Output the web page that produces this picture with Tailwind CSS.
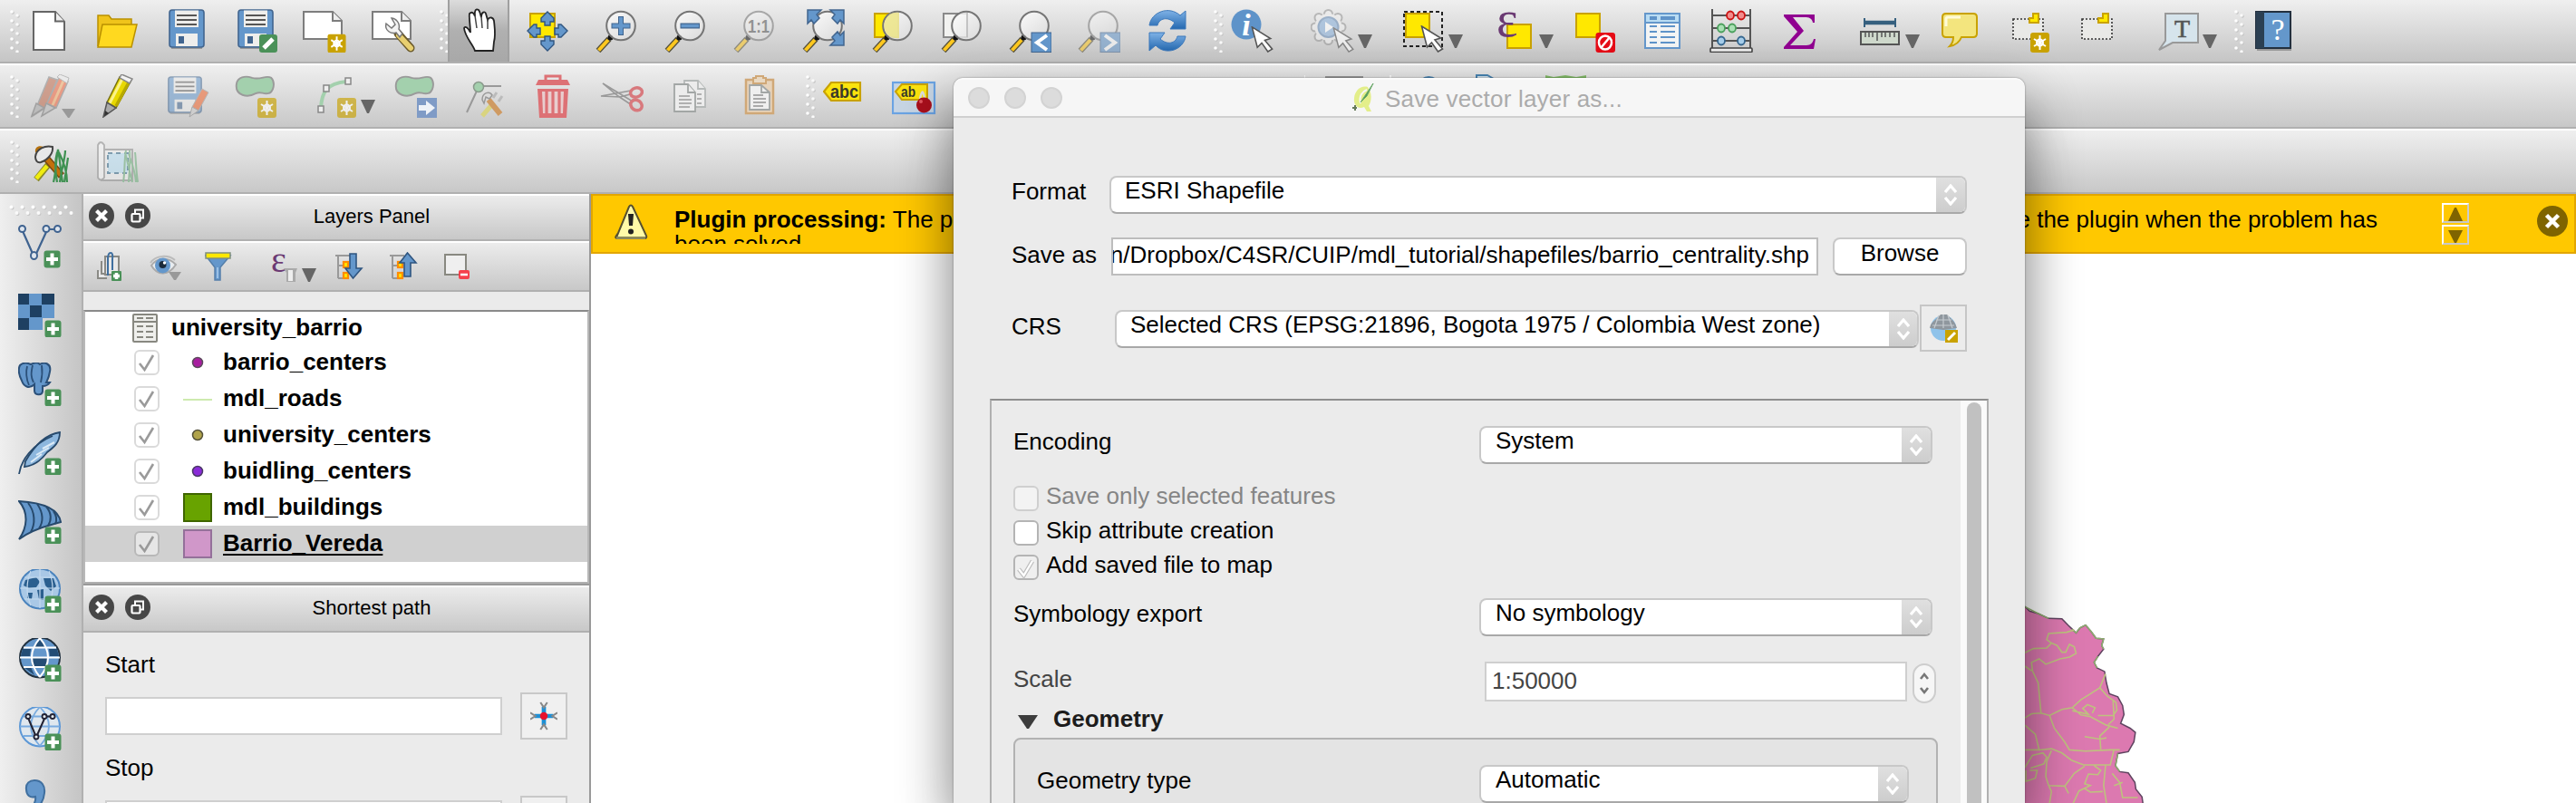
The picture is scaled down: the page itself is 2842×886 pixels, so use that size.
<!DOCTYPE html>
<html lang="en">
<head>
<meta charset="utf-8">
<title>QGIS - Save vector layer as</title>
<script src="https://cdn.jsdelivr.net/npm/@tailwindcss/browser@4"></script>
</head>
<body class="w-[2842px] h-[886px] overflow-hidden relative bg-white text-black text-[26px] leading-[28px] font-['Liberation_Sans',Arial,sans-serif] whitespace-nowrap">

<!-- shared symbols -->
<svg width="0" height="0" class="absolute">
  <defs>
    <linearGradient id="gBlue" x1="0" y1="0" x2="0" y2="1"><stop offset="0" stop-color="#7fb2e6"/><stop offset="1" stop-color="#2468b0"/></linearGradient>
    <linearGradient id="gLens" x1="0" y1="0" x2="1" y2="1"><stop offset="0" stop-color="#fff"/><stop offset="1" stop-color="#dcdcdc"/></linearGradient>
    <pattern id="pGrip" width="12" height="10" patternUnits="userSpaceOnUse">
      <circle cx="4" cy="4" r="1.800" fill="#c4c4c4"/><circle cx="3" cy="3" r="1.800" fill="#fff"/>
      <circle cx="10" cy="8" r="1.800" fill="#c4c4c4"/><circle cx="9" cy="7" r="1.800" fill="#fafafa"/>
    </pattern>
  </defs>
  <symbol id="grip" viewBox="0 0 12 48"><rect width="12" height="48" fill="url(#pGrip)"/></symbol>
  <symbol id="down" viewBox="0 0 16 15"><path d="M0 0H16L9 15H7Z" fill="#666"/></symbol>
  <symbol id="lens" viewBox="0 0 48 48">
    <path d="M16 33L4 46" stroke="#55503a" stroke-width="6.5"/><path d="M15 34L4.500 45.500" stroke="#ffc81e" stroke-width="4"/>
    <circle cx="17.500" cy="31.500" r="3" fill="#111"/>
    <circle cx="29" cy="18.500" r="15.800" fill="url(#gLens)" fill-opacity=".8" stroke="#757575" stroke-width="2"/>
  </symbol>
  <symbol id="star" viewBox="0 0 22 22"><rect width="21" height="22" rx="3" fill="#c9a200"/><path d="M10.500 3V19M4 7L17 15M17 7L4 15" stroke="#fff" stroke-width="2"/><circle cx="10.500" cy="11" r="3.500" fill="none" stroke="#fff" stroke-width="2"/></symbol>
  <symbol id="plus" viewBox="0 0 20 20"><rect x=".5" y=".5" width="18" height="19" rx="3" fill="#4a9158"/><path d="M9.500 3.500V16.500M3 10H16" stroke="#fff" stroke-width="4"/></symbol>
  <symbol id="cursor" viewBox="0 0 26 30"><path d="M1 1L22 14L15.500 16L24 26L19 29L12 19L7 24Z" fill="#fff" stroke="#555" stroke-width="1.600"/></symbol>
  <symbol id="floppy" viewBox="0 0 40 44"><path d="M3 43h34" stroke="#999" stroke-width="2"/><rect x="1" y="1" width="38" height="41" rx="3" fill="#6497cb" stroke="#41658f" stroke-width="1.600"/><rect x="7" y="1.500" width="26" height="18.500" fill="#eeeeec"/><path d="M9 7H31M9 12H31M9 17H31" stroke="#555" stroke-width="1.800"/><rect x="8" y="27" width="24" height="14" fill="#eeeeec"/><rect x="11" y="30" width="6" height="8" fill="#41658f"/></symbol>
  <symbol id="blob" viewBox="0 0 48 26"><path d="M2 10C3 2 12 0 20 3C30 6 36 -1 42 3C47 8 45 20 38 21C32 22 30 18 24 21C15 26 0 24 2 10Z" fill="#a3d0ad" stroke="#9a9a9a" stroke-width="2"/></symbol>
  <symbol id="chk" viewBox="0 0 28 28"><path d="M6 15L11.500 22L21 6" fill="none" stroke="#9a9a9a" stroke-width="2.600"/></symbol>
  <symbol id="updown" viewBox="0 0 14 24"><path d="M1 9L7 2L13 9M1 15L7 22L13 15" fill="none" stroke="currentColor" stroke-width="3.200"/></symbol>
  <symbol id="xbtn" viewBox="0 0 28 28"><circle cx="14" cy="14" r="14" fill="#474747"/><path d="M8.500 8.500L19.500 19.500M19.500 8.500L8.500 19.500" stroke="#fff" stroke-width="4.200"/></symbol>
  <symbol id="floatbtn" viewBox="0 0 28 28"><circle cx="14" cy="14" r="14" fill="#474747"/><path d="M11 11V7.500H20V16.500H16.500" fill="none" stroke="#fff" stroke-width="2"/><rect x="7.500" y="12" width="9" height="8.500" rx="1" fill="none" stroke="#fff" stroke-width="2.200"/></symbol>
  <symbol id="page" viewBox="0 0 48 48"><path d="M1 3H33L43 13V33H1Z" fill="#fff" stroke="#7d7d7d" stroke-width="2"/><path d="M33 3V13H43" fill="#eee" stroke="#7d7d7d" stroke-width="2"/></symbol>
  <symbol id="target" viewBox="0 0 32 32"><path d="M16 5V27M5 16H27" stroke="#1b8fd6" stroke-width="5"/><path d="M12 0L16 6L20 0M12 32L16 26L20 32M0 12L6 16L0 20M32 12L26 16L32 20" stroke="#888" fill="none" stroke-width="2.200"/><circle cx="16" cy="16" r="4.500" fill="#e8112d"/></symbol>
</svg>

<!-- toolbar 1 -->
<div class="h-[72px] border-b-2 border-white">
<div class="h-[70px] border-b-2 border-[#b0b0b0] bg-linear-to-b from-[#efefef] to-[#c5c5c5] flex items-start pl-[10px] [&>svg]:shrink-0 [&>svg]:mt-[10px]">
  <svg width="12" height="48"><use href="#grip"/></svg>
  <svg class="ml-2" width="48" height="48"><path d="M7 3H31L41 14V45H7Z" fill="#fff" stroke="#666" stroke-width="2"/><path d="M31 3V13.500H41" fill="#eee" stroke="#666" stroke-width="2"/></svg>
  <svg class="ml-7" width="48" height="48"><path d="M2 41V7H14L17 11H39V20" fill="#f0c41b" stroke="#b99000" stroke-width="1.500"/><path d="M7 17H45L39 42H2Z" fill="#ffd91f" stroke="#b99000" stroke-width="1.500"/></svg>
  <svg class="ml-7" width="48" height="48"><use href="#floppy" x="4" width="40" height="44"/></svg>
  <svg class="ml-7" width="48" height="48"><use href="#floppy" x="4" width="40" height="44"/><rect x="28" y="28" width="20" height="20" rx="3" fill="#4a9158"/><path d="M33 43L43 33" stroke="#fff" stroke-width="5"/></svg>
  <svg class="ml-7" width="49" height="48"><use href="#page" width="48" height="48"/><use href="#star" x="27" y="27.500" width="22" height="21"/></svg>
  <svg class="ml-[27px]" width="48" height="48"><use href="#page" width="48" height="48"/><path d="M29 27L43 43" stroke="#6b5a2a" stroke-width="9" stroke-linecap="round"/><path d="M30 29L43 43" stroke="#e8cf70" stroke-width="6" stroke-linecap="round"/><path d="M16 16C14 24 22 28 27 26L31 31L34 27L30 22C32 15 26 10 22 10L26 17L22 21Z" fill="#f3f3f3" stroke="#777" stroke-width="1.500"/></svg>
  <div class="ml-[26px] mt-[10px] w-[10px] h-12 overflow-hidden shrink-0"><svg width="12" height="48" class="max-w-none"><use href="#grip"/></svg></div>
  <div class="w-[68px] h-[68px] shrink-0 bg-linear-to-b from-[#dcdcdc] via-[#b0b0b0] to-[#a8a8a8] border-x-2 border-[#a0a0a0] pl-2 pt-[9px]">
    <svg width="48" height="50"><path d="M20 47C18 40 9 32 8 22C9 19 13 22 15 27C15 20 13 8 14 6C17 3 19 6 20 9C19 3 21 0 24 2C26 4 26 8 27 10C27 4 31 3 32 6L34 13C36 9 40 10 41 14C42 24 43 30 41 37L40 47Z" fill="#fff" stroke="#222" stroke-width="1.800"/><path d="M20 8L22 22M27 9L28 22M34 12V23" stroke="#444" stroke-width="1.500"/></svg>
  </div>
  <svg class="ml-[18px]" width="48" height="48"><rect x="5" y="5" width="27" height="26" fill="#ffe800" stroke="#c9a200" stroke-width="2"/><g fill="#6497cb" stroke="#2f5580" stroke-width="1.400"><path d="M24 3L31 10L31 14H27V18H21V14H17V10Z"/><path d="M24 46L31 39V35H27V30H21V35H17V39Z"/><path d="M2 24L9 17H12V21H16V28H12V31H9Z"/><path d="M46 24L39 17H36V21H32V28H36V31H39Z"/></g></svg>
  <svg class="ml-7" width="48" height="48"><use href="#lens" width="48" height="48"/><path d="M29 8V29M18.500 18.500H39.500" stroke="#41658f" stroke-width="6"/><path d="M29 9V28M19.500 18.500H38.500" stroke="#6497cb" stroke-width="4"/></svg>
  <svg class="ml-7" width="48" height="48"><use href="#lens" width="48" height="48"/><path d="M18.500 18.500H40" stroke="#41658f" stroke-width="6"/><path d="M19.500 18.500H39" stroke="#6497cb" stroke-width="3.500"/></svg>
  <svg class="ml-7 opacity-55" width="48" height="48"><use href="#lens" width="48" height="48"/><text x="29" y="26" text-anchor="middle" font-size="20" font-weight="bold" textLength="24" lengthAdjust="spacingAndGlyphs" fill="#555">1:1</text></svg>
  <svg class="ml-7" width="48" height="48"><use href="#lens" width="48" height="48"/><g fill="#6497cb" stroke="#41658f" stroke-width="1.500"><path d="M7 1H22L17 6L20 10L14 16L11 12L7 16ZM47 1H32L37 6L34 10L40 16L43 12L47 16ZM47 40H32L37 35L34 31L40 25L43 29L47 25Z"/></g></svg>
  <svg class="ml-7" width="50" height="48"><rect x="5" y="5" width="26" height="26" fill="#ffe800" stroke="#c9a200" stroke-width="2"/><use href="#lens" x="1" width="48" height="48"/><path d="M32 4C20 2 14 12 16 22C18 30 26 33 32 32Z" fill="#e9e283" opacity=".7"/></svg>
  <svg class="ml-[26px]" width="50" height="48"><rect x="5" y="5" width="26" height="26" fill="#f2f2f0" stroke="#8a8a8a" stroke-width="2"/><use href="#lens" x="1" width="48" height="48"/><path d="M31 4V31" stroke="#bbb" stroke-width="1.500"/></svg>
  <svg class="ml-[26px]" width="48" height="48"><use href="#lens" width="48" height="48"/><rect x="26" y="26" width="22" height="21.500" fill="#6497cb" stroke="#41658f"/><path d="M43 29L32 37L43 45" fill="none" stroke="#fff" stroke-width="4"/></svg>
  <svg class="ml-7 opacity-55" width="48" height="48"><use href="#lens" width="48" height="48"/><rect x="26" y="26" width="22" height="21.500" fill="#6497cb" stroke="#41658f"/><path d="M31 29L42 37L31 45" fill="none" stroke="#fff" stroke-width="4"/></svg>
  <svg class="ml-7" width="48" height="48"><path d="M4 18C6 3 26 -4 38 7L44 2V22H27L32 15C24 8 15 10 13 18Z" fill="url(#gBlue)" stroke="#3d79bb"/><path d="M44 30C42 45 22 52 11 40L4 46V26H21L16 33C24 40 33 38 35 30Z" fill="url(#gBlue)" stroke="#3d79bb"/></svg>
  <svg class="ml-[26px]" width="12" height="48"><use href="#grip"/></svg>
  <svg class="ml-2" width="48" height="48"><circle cx="17" cy="17" r="16.500" fill="#5e93c9"/><text x="17" y="29" text-anchor="middle" font-family="Liberation Serif" font-style="italic" font-weight="bold" font-size="34" fill="#fff">i</text><use href="#cursor" x="22" y="19" width="26" height="29"/></svg>
  <svg class="ml-10" width="48" height="48"><g opacity=".6"><g fill="#eee" stroke="#999" stroke-width="2"><circle cx="19.500" cy="5.500" r="4.500"/><circle cx="30" cy="9.500" r="4.500"/><circle cx="34" cy="20" r="4.500"/><circle cx="30" cy="30.500" r="4.500"/><circle cx="19.500" cy="34.500" r="4.500"/><circle cx="9" cy="30.500" r="4.500"/><circle cx="5" cy="20" r="4.500"/><circle cx="9" cy="9.500" r="4.500"/></g><circle cx="19.500" cy="20" r="15" fill="#eee"/><circle cx="19.500" cy="20" r="11" fill="#8fb4dc" stroke="#6d90b8" stroke-width="2"/><path d="M16 14V26L25 20Z" fill="#fff"/><use href="#cursor" x="24" y="20" width="25" height="28"/></g></svg>
  <svg class="ml-1 translate-y-7" width="16" height="15"><use href="#down"/></svg>
  <svg class="ml-[34px]" width="48" height="48"><rect x="1" y="3" width="42" height="38" fill="none" stroke="#222" stroke-width="2" stroke-dasharray="4 3"/><rect x="3" y="5" width="26" height="26" fill="#ffe800" stroke="#c9a200" stroke-width="2"/><use href="#cursor" x="19" y="18" width="27" height="30"/></svg>
  <svg class="ml-[2px] translate-y-7" width="16" height="15"><use href="#down"/></svg>
  <svg class="ml-[34px]" width="48" height="48"><rect x="15" y="17" width="26" height="26" fill="#ffe800" stroke="#c9a200" stroke-width="2"/><text x="3" y="30" font-family="Liberation Serif" font-size="56" fill="#6b3a73">ε</text></svg>
  <svg class="ml-[2px] translate-y-7" width="16" height="15"><use href="#down"/></svg>
  <svg class="ml-[22px]" width="48" height="48"><rect x="3" y="5" width="26" height="26" fill="#ffe800" stroke="#c9a200" stroke-width="2"/><rect x="24.500" y="26" width="21.500" height="22" rx="3" fill="#e60b16"/><ellipse cx="35" cy="37" rx="7" ry="7.500" fill="none" stroke="#fff" stroke-width="2.500"/><path d="M40 31L30 43" stroke="#fff" stroke-width="2.500"/></svg>
  <svg class="ml-[26px]" width="48" height="48"><rect x="5" y="5" width="38" height="38" fill="#f3f4f4" stroke="#6497cb" stroke-width="2"/><rect x="5" y="5" width="38" height="10" fill="#b9dcf3" stroke="#6497cb" stroke-width="2"/><path d="M10 10H18M22 10H38" stroke="#5e93c9" stroke-width="4"/><path d="M10 19H18M22 19H38M10 25H18M22 25H38M10 31H18M22 31H38M10 37H18M22 37H38" stroke="#5e93c9" stroke-width="2.200"/></svg>
  <svg class="ml-7" width="48" height="48"><path d="M3 0V43M45 0V43M3 7H45M3 21H45M3 35H45" stroke="#555" stroke-width="2"/><rect x="1" y="43" width="46" height="4.500" rx="1" fill="#eee" stroke="#444" stroke-width="1.600"/><g stroke-width="1.800"><g fill="#f28d8d" stroke="#cc1414"><ellipse cx="23" cy="7" rx="4" ry="4.500"/><ellipse cx="35" cy="7" rx="4" ry="4.500"/></g><g fill="#a9e0b4" stroke="#4a9f5c"><ellipse cx="13" cy="21" rx="4" ry="4.500"/><ellipse cx="25" cy="21" rx="4" ry="4.500"/></g><g fill="#a6cdea" stroke="#36678f"><ellipse cx="13" cy="35" rx="4" ry="4.500"/><ellipse cx="35" cy="35" rx="4" ry="4.500"/></g></g></svg>
  <svg class="ml-7" width="48" height="48"><path d="M6 6H40V15H38C37 10 34 9 29 9H16L28 24L13 40H31C36 40 38 37 39 33H41L39 44H6V42L21 25L6 8Z" fill="#900090"/></svg>
  <svg class="ml-[38px]" width="48" height="48"><path d="M9 10V20M43 10V20" stroke="#36607f" stroke-width="2"/><path d="M9 15H43" stroke="#36607f" stroke-width="4.500"/><rect x="5" y="25" width="42" height="14" fill="#cfd9cc" stroke="#555" stroke-width="2"/><path d="M10 26V31M14 26V31M18 26V31M23 26V35M28 26V31M32 26V31M37 26V31M42 26V31" stroke="#555" stroke-width="1.500"/></svg>
  <svg class="ml-[6px] translate-y-7" width="16" height="15"><use href="#down"/></svg>
  <svg class="ml-5" width="48" height="48"><path d="M9 5H39Q43 5 43 9V27Q43 31 39 31H26C24 36 19 40 13 41C16 38 17 35 17 31H9Q5 31 5 27V9Q5 5 9 5Z" fill="#f3e57e" stroke="#c9a200" stroke-width="2"/><path d="M9 19V11Q9 9 11 9H25" fill="none" stroke="#fffbd8" stroke-width="3"/></svg>
  <svg class="ml-[30px]" width="48" height="48"><rect x="5" y="11" width="33" height="22" fill="#e9e9e7" stroke="#333" stroke-width="1.600" stroke-dasharray="2 2"/><path d="M27 5H33V15H23V10H27Z" fill="#ffe800" stroke="#c9a200" stroke-width="2"/><use href="#star" x="24" y="26" width="22" height="22"/></svg>
  <svg class="ml-7" width="48" height="48"><rect x="5" y="11" width="33" height="22" fill="#e9e9e7" stroke="#333" stroke-width="1.600" stroke-dasharray="2 2"/><path d="M28 5H34V15H23V10H28Z" fill="#ffe800" stroke="#c9a200" stroke-width="2"/></svg>
  <svg class="ml-10" width="48" height="48"><path d="M9 5H45V37H17L2 45L9 35Z" fill="#d6e4ec" stroke="#999" stroke-width="2"/><text x="27.500" y="31" text-anchor="middle" font-family="Liberation Serif" font-size="28" fill="#555" stroke="#555" stroke-width=".6">T</text></svg>
  <svg class="ml-[2px] translate-y-7" width="16" height="15"><use href="#down"/></svg>
  <svg class="ml-[18px]" width="12" height="48"><use href="#grip"/></svg>
  <svg class="ml-2" width="48" height="48"><path d="M6 45H44" stroke="#999" stroke-width="2"/><rect x="5" y="3" width="38" height="40" fill="#6497cb" stroke="#23303f" stroke-width="2"/><rect x="5" y="3" width="9" height="40" fill="#2b3f52"/><text x="29" y="34" text-anchor="middle" font-family="Liberation Serif" font-size="34" fill="#fff">?</text></svg>
</div>
</div>

<!-- toolbar 2 -->
<div class="h-[72px] border-b-2 border-white">
<div class="h-[70px] border-b-2 border-[#b0b0b0] bg-linear-to-b from-[#efefef] to-[#c8c8c8] flex items-start pl-[10px] [&>svg]:shrink-0 [&>svg]:mt-[10px]">
  <svg width="12" height="48"><use href="#grip"/></svg>
  <svg class="ml-2" width="54" height="48"><g opacity=".55"><path d="M12 32L24 3L33 6L20 37L6 46Z" fill="#bf6a4c" stroke="#888" stroke-width="1.500"/><path d="M10 32L5 46L19 37Z" fill="#aaa" stroke="#777" stroke-width="1.500"/><path d="M22 32L35 4L45 8L32 37Z" fill="#f0643c" stroke="#888" stroke-width="1.500"/><path d="M28 34L40 7" stroke="#f5b06c" stroke-width="3"/><path d="M33 3L36 0L46 4L44 10Z" fill="#eee" stroke="#999"/><path d="M21 32L16 46L31 37Z" fill="#bbb" stroke="#777" stroke-width="1.500"/></g><path d="M38 38H53L46.500 48H45Z" fill="#999"/></svg>
  <svg class="ml-[22px]" width="48" height="48"><path d="M12 31L26 3L38 8L22 37Z" fill="#e8d800" stroke="#777013" stroke-width="1.500"/><path d="M15 32L29 5" stroke="#fbf28a" stroke-width="3"/><path d="M22 35L36 9" stroke="#b7a900" stroke-width="3.500"/><path d="M26 4L28 0L40 5L37 10Z" fill="#f3f3f3" stroke="#888" stroke-width="1.500"/><path d="M12 31L8 47L22 37Z" fill="#aaa" stroke="#555" stroke-width="1.500"/><path d="M9 46L10 40L14 43Z" fill="#333"/></svg>
  <svg class="ml-7" width="50" height="48"><g opacity=".55"><use href="#floppy" x="2" y="2" width="40" height="42"/><path d="M30 36L41 16L48 20L37 40Z" fill="#f0642c" stroke="#999"/><path d="M30 36L27 47L37 40Z" fill="#ccc" stroke="#888"/></g></svg>
  <svg class="ml-[26px]" width="48" height="48"><use href="#blob" x="1" y="1" width="46" height="25"/><use href="#star" x="26" y="26" width="22" height="22" opacity=".65"/></svg>
  <svg class="ml-[42px]" width="48" height="48"><path d="M6 37C7 20 12 10 34 8" fill="none" stroke="#a3d0ad" stroke-width="4"/><g fill="#eee" stroke="#888" stroke-width="1.500"><rect x="3" y="35" width="6" height="7"/><rect x="9" y="12" width="6" height="7"/><rect x="33" y="4" width="6" height="7"/></g><use href="#star" x="24" y="26" width="22" height="22" opacity=".65"/></svg>
  <svg class="ml-0.5 translate-y-7" width="16" height="15"><use href="#down"/></svg>
  <svg class="ml-[20px]" width="48" height="48"><use href="#blob" x="1" y="1" width="46" height="25"/><rect x="26" y="26" width="22" height="22" fill="#7f9bc6"/><path d="M28 34H36V29L46 37L36 45V40H28Z" fill="#eef2f8"/></svg>
  <svg class="ml-7" width="48" height="48"><path d="M18 14L5 42M18 13H43" stroke="#999" stroke-width="2"/><circle cx="18" cy="14" r="5.500" fill="#a3d0ad" stroke="#8a9a8c" stroke-width="1.500"/><path d="M22 46L34 32" stroke="#d9d480" stroke-width="5"/><path d="M29 28L42 44" stroke="#cf9a62" stroke-width="6"/><path d="M22 28C22 20 30 18 33 23L30 27L26 25L24 32Z" fill="#ddd" stroke="#999" stroke-width="1.500"/><path d="M34 26L38 20M40 30L44 24" stroke="#bbb" stroke-width="3"/></svg>
  <svg class="ml-7" width="48" height="48"><path d="M16 7V2H32V7" fill="none" stroke="#dd7175" stroke-width="3"/><path d="M5 12L8 6H40L43 12Z" fill="#dd7175"/><path d="M7 16H41L39 48H9Z" fill="#dd7175"/><path d="M12 19H36L35 43H13Z" fill="#ececec" opacity=".75"/><path d="M17 19V43M24 19V43M31 19V43" stroke="#dd7175" stroke-width="3.200"/></svg>
  <svg class="ml-7" width="48" height="48"><path d="M3 10L36 30L32 32L20 24ZM1 24L34 18L33 22L22 25Z" fill="#ddd" stroke="#999" stroke-width="1.600"/><ellipse cx="40" cy="20" rx="6.500" ry="5" fill="none" stroke="#d8797d" stroke-width="3.500" transform="rotate(-15 40 20)"/><ellipse cx="40" cy="34" rx="6.500" ry="5.500" fill="none" stroke="#d8797d" stroke-width="3.500" transform="rotate(35 40 34)"/></svg>
  <svg class="ml-7" width="48" height="48"><g stroke="#b5b9b8" stroke-width="1.800" fill="#ececec"><path d="M17 7H32L40 16V36H17Z"/><path d="M32 7V16H40"/><path d="M6 11H21L29 20V41H6Z" stroke="#a2a6a5"/><path d="M21 11V20H29" stroke="#a2a6a5"/></g><path d="M11 24H23M11 28H25M11 32H25M11 36H23M31 22H36M31 27H36M31 32H36" stroke="#b0b0b0" stroke-width="1.800"/></svg>
  <svg class="ml-7" width="48" height="48"><rect x="9" y="6" width="30" height="37" fill="#e7d3bb" stroke="#d0a877" stroke-width="2.500"/><path d="M13 12H26L35 20V39H13Z" fill="#efefef" stroke="#a2a6a5" stroke-width="1.800"/><path d="M26 12V20H35" fill="none" stroke="#a2a6a5" stroke-width="1.800"/><path d="M17 23H28M17 27H31M17 31H31M17 35H28" stroke="#aaa" stroke-width="1.800"/><path d="M17 10V4H20V2H28V4H31V10Z" fill="#e9d9c3" stroke="#d0a877" stroke-width="2"/></svg>
  <svg class="ml-[26px]" width="12" height="48"><use href="#grip"/></svg>
  <svg class="ml-2" width="44" height="48"><path d="M1 19L9 9H41V29H9Z" fill="#fbe30e" stroke="#c9a200" stroke-width="2.200"/><text x="8" y="26" font-size="20" font-weight="bold" textLength="31" lengthAdjust="spacingAndGlyphs" fill="#3a3a2a">abc</text></svg>
  <svg class="ml-8" width="50" height="48"><rect x="1" y="9" width="46" height="34" fill="#c7d5e4" stroke="#6aa3e3" stroke-width="2.200"/><path d="M4 19L11 11H39V28H11Z" fill="#fbe30e" stroke="#c9a200" stroke-width="2"/><text x="10" y="25" font-size="16" font-weight="bold" textLength="16" lengthAdjust="spacingAndGlyphs" fill="#3a3a2a">ab</text><path d="M31 27Q34 12 36 27" fill="none" stroke="#ddd" stroke-width="2.500"/><ellipse cx="35.500" cy="34" rx="8.500" ry="8.500" fill="#a90f1c"/><circle cx="32" cy="30" r="2" fill="#e0545e"/></svg>
  <!-- icons mostly hidden under the dialog -->
  <svg class="ml-[405px]" width="320" height="48"><path d="M0 1V4M95 1V4" stroke="#fff" stroke-width="2"/><path d="M23 3H65" stroke="#999" stroke-width="2"/><path d="M129 5Q137 -1 146 5Z" fill="#4a86b5"/><path d="M190 5V1H202L209 5" stroke="#4a86b5" stroke-width="2" fill="#dceaf4"/><path d="M266 4V1L275 3L288 1L300 3L311 1V5H266Z" fill="#86c06b"/></svg>
</div>
</div>

<!-- toolbar 3 -->
<div class="h-[70px] border-b-2 border-[#b0b0b0] bg-linear-to-b from-[#efefef] to-[#c8c8c8] flex items-start pl-[10px] [&>svg]:shrink-0 [&>svg]:mt-[10px]">
  <svg width="12" height="48"><use href="#grip"/></svg>
  <svg class="ml-2" width="50" height="50"><path d="M10 44L23 28" stroke="#8a8a2a" stroke-width="7"/><path d="M10 43L22 29" stroke="#f0ec10" stroke-width="4.500"/><path d="M17 16L38 40" stroke="#7a4a10" stroke-width="8"/><path d="M18 17L37 39" stroke="#c4700b" stroke-width="5"/><path d="M9 14C8 8 13 6 18 8L13 16Z" fill="#b5720f"/><path d="M9 19C10 10 20 6 28 8C29 14 24 22 15 25C11 26 9 23 9 19Z" fill="#e8e8e8" stroke="#444" stroke-width="2"/><path d="M29 47C32 35 32 20 34 11C36 22 37 35 39 47M36 47C38 32 42 20 42 12M44 47C44 34 38 20 35 14M33 14C30 25 31 36 33 47M45 20L41 47" fill="none" stroke="#3f9152" stroke-width="2.200"/></svg>
  <svg class="ml-[26px]" width="50" height="50"><g opacity=".65"><path d="M6 11H40V45H6Z" fill="#eee" stroke="#999" stroke-width="2"/><path d="M2 6Q5 0 9 6V42Q5 47 2 42Z" fill="#f3f3f3" stroke="#999" stroke-width="1.800"/><rect x="13" y="15" width="22" height="22" fill="#bfe0f2" stroke="#4c7a96" stroke-width="2" stroke-dasharray="5 4"/><path d="M30 47C32 35 31 20 33 12M36 47C37 32 38 20 37 12M44 47C43 34 38 22 36 16M46 47C44 34 44 22 43 14M40 47L32 14" fill="none" stroke="#7ab487" stroke-width="2"/></g></svg>
</div>

<!-- main area -->
<div class="flex h-[672px] overflow-hidden">

  <!-- layer source toolbar -->
  <div class="w-[92px] h-[672px] shrink-0 bg-linear-to-r from-[#efefef] to-[#c5c5c5] border-r-2 border-[#b0b0b0] flex flex-col items-start pl-5 pt-3 gap-[28px] [&>svg]:shrink-0 overflow-hidden">
    <svg class="-ml-[10px] -mb-[18px]" width="72" height="12"><defs><pattern id="pGripH" width="12" height="12" patternUnits="userSpaceOnUse"><circle cx="3.500" cy="3.500" r="2" fill="#c6c6c6"/><circle cx="2.500" cy="2.500" r="2" fill="#fff"/><circle cx="9.500" cy="10" r="2" fill="#c6c6c6"/><circle cx="8.500" cy="9" r="2" fill="#fafafa"/></pattern></defs><rect width="72" height="12" fill="url(#pGripH)"/></svg>
    <svg width="48" height="48"><path d="M5 7L17 34M19 34L31 8M33 5H41" stroke="#3f6390" stroke-width="2.200"/><g fill="#dfe6ee" stroke="#3f6390" stroke-width="2"><circle cx="4.500" cy="4.500" r="3.500"/><circle cx="31" cy="4.500" r="3.500"/><circle cx="43.500" cy="4.500" r="3.500"/><ellipse cx="17.500" cy="34" rx="3.500" ry="4"/></g><use href="#plus" x="28" y="28" width="20" height="20"/></svg>
    <svg width="48" height="48"><rect width="40" height="40" fill="#6497cb"/><path d="M0 0H12V12H0ZM26 0H40V12H26ZM13 13H26V26H13ZM0 27H12V40H0Z" fill="#1e4062"/><path d="M27 27H40V40H27Z" fill="#d6d6d6"/><use href="#plus" x="29" y="29" width="20" height="20"/></svg>
    <svg width="48" height="48"><path d="M2 3C6 -1 12 1 14 2C18 0 22 0 24 2C29 -1 37 1 35 10C34 17 32 20 31 22L35 22C33 25 29 26 27 26V32C26 37 18 36 18 31V24C12 30 6 26 4 20C1 14 0 7 2 3Z" fill="#6497cb" stroke="#2b5079" stroke-width="2"/><path d="M10 4C8 12 9 18 12 25M16 3C14 12 14 16 17 22M26 3C27 10 27 14 25 22" fill="none" stroke="#2b5079" stroke-width="1.800"/><use href="#plus" x="29" y="29" width="20" height="20"/></svg>
    <svg width="48" height="48"><path d="M46 1C32 3 20 12 8 33L7 39C18 38 26 31 32 23C40 17 46 12 46 1Z" fill="#8db7de" stroke="#274a6d" stroke-width="1.800"/><path d="M1 47C3 32 16 14 38 5" fill="none" stroke="#274a6d" stroke-width="1.800"/><path d="M14 34L26 25M20 26L34 18M27 19L40 12" stroke="#dcebf7" stroke-width="2"/><use href="#plus" x="29" y="29" width="20" height="20"/></svg>
    <svg width="48" height="48"><path d="M1 1C18 2 44 6 47 24C38 27 18 30 1 43C10 30 12 14 1 1Z" fill="#6497cb" stroke="#274a6d" stroke-width="2"/><path d="M11 3C19 13 19 26 14 35M21 4C28 14 28 24 23 31M31 7C37 14 37 22 33 28M39 12C43 18 43 22 41 26" fill="none" stroke="#274a6d" stroke-width="2"/><use href="#plus" x="29" y="29" width="20" height="20"/></svg>
    <svg width="48" height="48"><circle cx="24" cy="21.500" r="22" fill="#a9c8e6" stroke="#4a83bd" stroke-width="2"/><path d="M8 12L20 9L24 14L20 20L12 21L6 18ZM28 10L39 10L42 19L36 24L30 18ZM21 23L28 22L28 34L23 33Z" fill="#2b5f8f"/><path d="M10 26L16 26L15 33L10 32Z" fill="#2b5f8f"/><path d="M2 21H46M24 0V43M7 9H41M7 33H41M14 2Q6 21 14 40M34 2Q42 21 34 40" fill="none" stroke="#c3d9ee" stroke-width="1.200"/><use href="#plus" x="29" y="29" width="20" height="20"/></svg>
    <svg width="48" height="48"><circle cx="24" cy="21.500" r="22" fill="#6497cb" stroke="#22313f" stroke-width="2"/><path d="M16 11H32L24 1ZM15 21H32V31H15ZM5 12H14L13 20H3ZM34 12H43L45 20H35ZM6 32H14L18 41ZM33 32H42L30 41Z" fill="#244d75"/><path d="M2 21.500H46M6 10.500H42M6 32H42M24 0Q6 21 24 43M24 0Q42 21 24 43" fill="none" stroke="#fff" stroke-width="2"/><use href="#plus" x="29" y="29" width="20" height="20"/></svg>
    <svg width="48" height="48"><circle cx="24" cy="21.500" r="22" fill="#dfe7ee" stroke="#5b97d6" stroke-width="2"/><path d="M2 21.500H46M6 10.500H42M6 32H42M24 0Q4 21 24 43M24 0Q44 21 24 43" fill="none" stroke="#79abdf" stroke-width="1.800"/><path d="M11 12L19 31M21 31L29 13M30 10.500H37" stroke="#223" stroke-width="2"/><g fill="#e8eef3" stroke="#223" stroke-width="1.800"><circle cx="11" cy="10.500" r="2.500"/><circle cx="29" cy="10.500" r="2.500"/><circle cx="38" cy="10.500" r="2.500"/><circle cx="20" cy="33" r="2.500"/></g><use href="#plus" x="29" y="29" width="20" height="20"/></svg>
    <svg width="48" height="48"><path d="M9 15C8 8 13 5 18 5C26 5 30 11 29 19C28 30 21 37 12 41L11 38C17 34 20 28 19 23C13 25 9 21 9 15Z" fill="#6497cb" stroke="#3f6f9f" stroke-width="2"/></svg>
  </div>

  <!-- docked panels -->
  <div class="w-[560px] h-[672px] overflow-hidden shrink-0 bg-[#ebebeb] border-r-2 border-[#999] flex flex-col">
    <div class="h-[52px] shrink-0 border-t-2 border-t-white border-b-2 border-b-[#b0b0b0] bg-linear-to-b from-[#ececec] to-[#c8c8c8] grid grid-cols-[70px_1fr] text-[22px]">
      <div class="flex gap-[12px] pl-[6px] pt-2"><svg class="shrink-0" width="28" height="28"><use href="#xbtn"/></svg><svg class="shrink-0" width="28" height="28"><use href="#floatbtn"/></svg></div>
      <div class="text-center pl-2 pt-[9px]">Layers Panel</div>
    </div>
    <div class="h-[56px] shrink-0 border-t-2 border-t-white border-b-2 border-b-[#b0b0b0] bg-linear-to-b from-[#ececec] to-[#c8c8c8] flex items-start pl-[14px] pt-[10px] [&>svg]:shrink-0">
      <svg width="30" height="34"><g fill="#e8e8e8" stroke="#8a8a85" stroke-width="2"><path d="M2 20V29H12"/><path d="M6 10V24H14"/><rect x="10" y="5" width="15" height="20"/></g><path d="M13 26V8Q13 1 16 1T18 8V20" fill="none" stroke="#3f6f9f" stroke-width="2"/><rect x="17" y="21" width="11" height="11" rx="1" fill="#4a9158"/><path d="M22.500 23V30M19 26.500H26" stroke="#fff" stroke-width="3.500"/></svg>
      <svg class="ml-[28px]" width="38" height="34"><path d="M3 15C9 6 22 5 30 14C22 26 10 27 3 15Z" fill="#e8ecef" stroke="#aaa" stroke-width="2"/><path d="M2 12C8 3 22 3 29 9" fill="none" stroke="#bbb" stroke-width="2"/><circle cx="15.500" cy="15" r="8.500" fill="#6497cb"/><circle cx="15.500" cy="14" r="4" fill="#1b2b3b"/><circle cx="17.500" cy="12" r="1.700" fill="#fff"/><path d="M22 22H36L30 31H28Z" fill="#999"/></svg>
      <svg class="ml-[24px]" width="30" height="34"><path d="M1 4L11 17V31H17V17L28 4Z" fill="#6497cb" stroke="#557faa" stroke-width="1.500"/><path d="M13 17H15V29H13Z" fill="#9bc0e5"/><rect x="1" y="1" width="27" height="6" fill="#ffe800" stroke="#7f8f7f" stroke-width="1.500"/></svg>
      <svg class="ml-[43px]" width="54" height="36"><text x="0" y="22" font-family="Liberation Serif" font-size="40" fill="#6b3a73">ε</text><path d="M14 18H29L27 23V33H17V23Z" fill="#aaa"/><path d="M19 20H24V32H19Z" fill="#eee"/><use href="#down" x="34" y="18" width="16" height="15"/></svg>
      <svg class="ml-[17px]" width="34" height="34"><path d="M0 4H16M3 4V29M3 15H9M3 29H9" stroke="#999" stroke-width="2" fill="none"/><g fill="#ffe800" stroke="#ff8c00" stroke-width="2.200"><rect x="9" y="11" width="5" height="6"/><rect x="9" y="23" width="5" height="6"/></g><path d="M16 2H23V18H29L19.500 29L11 18H16Z" fill="#6497cb" stroke="#2f5580" stroke-width="1.600"/></svg>
      <svg class="ml-[26px]" width="34" height="34"><path d="M0 4H16M3 4V29M3 15H9M3 29H9" stroke="#999" stroke-width="2" fill="none"/><g fill="#ffe800" stroke="#ff8c00" stroke-width="2.200"><rect x="9" y="11" width="5" height="6"/><rect x="9" y="23" width="5" height="6"/></g><path d="M16 27H23V12H29L19.500 1L11 12H16Z" fill="#6497cb" stroke="#2f5580" stroke-width="1.600"/></svg>
      <svg class="ml-[26px]" width="34" height="34"><rect x="1" y="3" width="23" height="22" fill="#efefef" stroke="#888880" stroke-width="2"/><rect x="16" y="20" width="12" height="10" rx="2" fill="#f5414c"/><path d="M18 25H26" stroke="#fff" stroke-width="2.500"/></svg>
    </div>

    <!-- layer tree -->
    <div class="mt-5 h-[302px] shrink-0 bg-white border-t-2 border-t-[#8a8a8a] border-x-2 border-x-[#b8b8b8] border-b-2 border-b-[#b0b0b0] font-bold leading-[38px] overflow-hidden">
      <div class="h-[36px] flex pl-[52px]"><svg class="mt-[2px]" width="28" height="32"><rect x="1" y="1" width="26" height="30" rx="1" fill="#efefec" stroke="#888880" stroke-width="2"/><path d="M1 9H27" stroke="#888880" stroke-width="2"/><path d="M5 5H12M15 5H23M5 14H12M15 14H23M5 20H12M15 20H23M5 26H12M15 26H23" stroke="#888880" stroke-width="1.800"/></svg><span class="ml-[15px] -mt-[2px]">university_barrio</span></div>
      <div class="h-10 flex items-start pl-[54px]"><div class="mt-[6px] w-7 h-7 border-2 border-[#dadada] rounded-[6px]"><svg class="-m-[2px] max-w-none" width="28" height="28"><use href="#chk"/></svg></div><svg class="ml-[26px] mt-1" width="32" height="32"><circle cx="16" cy="16" r="5.500" fill="#a81ea0" stroke="#5c4a5c" stroke-width="1.500"/></svg><span class="ml-3">barrio_centers</span></div>
      <div class="h-10 flex items-start pl-[54px]"><div class="mt-[6px] w-7 h-7 border-2 border-[#dadada] rounded-[6px]"><svg class="-m-[2px] max-w-none" width="28" height="28"><use href="#chk"/></svg></div><svg class="ml-[26px] mt-1" width="32" height="32"><path d="M0 17H32" stroke="#cdeaae" stroke-width="2"/></svg><span class="ml-3">mdl_roads</span></div>
      <div class="h-10 flex items-start pl-[54px]"><div class="mt-[6px] w-7 h-7 border-2 border-[#dadada] rounded-[6px]"><svg class="-m-[2px] max-w-none" width="28" height="28"><use href="#chk"/></svg></div><svg class="ml-[26px] mt-1" width="32" height="32"><circle cx="16" cy="16" r="5.500" fill="#b0a34a" stroke="#55523a" stroke-width="1.500"/></svg><span class="ml-3">university_centers</span></div>
      <div class="h-10 flex items-start pl-[54px]"><div class="mt-[6px] w-7 h-7 border-2 border-[#dadada] rounded-[6px]"><svg class="-m-[2px] max-w-none" width="28" height="28"><use href="#chk"/></svg></div><svg class="ml-[26px] mt-1" width="32" height="32"><circle cx="16" cy="16" r="5.500" fill="#8a2bd8" stroke="#4b3a66" stroke-width="1.500"/></svg><span class="ml-3">buidling_centers</span></div>
      <div class="h-10 flex items-start pl-[54px]"><div class="mt-[6px] w-7 h-7 border-2 border-[#dadada] rounded-[6px]"><svg class="-m-[2px] max-w-none" width="28" height="28"><use href="#chk"/></svg></div><div class="ml-[26px] mt-1 w-8 h-8 bg-[#68a300] border-2 border-[#3f6500]"></div><span class="ml-3">mdl_buildings</span></div>
      <div class="h-10 flex items-start pl-[54px] bg-[#d0d0d0]"><div class="mt-[6px] w-7 h-7 border-2 border-[#b8b8b8] bg-[#e6e6e6] rounded-[6px]"><svg class="-m-[2px] max-w-none" width="28" height="28"><use href="#chk"/></svg></div><div class="ml-[26px] mt-1 w-8 h-8 bg-[#d097c9] border-2 border-[#94709a]"></div><span class="ml-3 underline underline-offset-[3px] decoration-2 [text-decoration-skip-ink:none]">Barrio_Vereda</span></div>
    </div>

    <div class="h-[54px] shrink-0 border-t-2 border-t-[#999] border-b-2 border-b-[#b0b0b0]"><div class="h-[50px] border-t-2 border-white bg-linear-to-b from-[#ececec] to-[#c8c8c8] grid grid-cols-[70px_1fr] text-[22px]">
      <div class="flex gap-[12px] pl-[6px] pt-2"><svg class="shrink-0" width="28" height="28"><use href="#xbtn"/></svg><svg class="shrink-0" width="28" height="28"><use href="#floatbtn"/></svg></div>
      <div class="text-center pl-2 pt-[9px]">Shortest path</div>
    </div></div>
    <div class="pl-6 pt-[21px]">
      <div class="h-7">Start</div>
      <div class="flex items-center gap-5 mt-[17px]"><div class="w-[438px] h-[42px] bg-white border-2 border-[#cfcfcf]"></div><div class="w-[52px] h-[52px] bg-[#f0f0f0] border-2 border-[#c8c8c8] grid place-items-center"><svg width="30" height="32"><use href="#target"/></svg></div></div>
      <div class="h-7 mt-[17px]">Stop</div>
      <div class="flex items-center gap-5 mt-[17px]"><div class="w-[438px] h-[42px] bg-white border-2 border-[#cfcfcf]"></div><div class="w-[52px] h-[52px] bg-[#f0f0f0] border-2 border-[#c8c8c8]"></div></div>
    </div>
  </div>

  <!-- map column -->
  <div class="flex-1 min-w-0 bg-white">
    <div class="h-[66px] bg-[#ffc800] border-2 border-[#e3a600] flex items-start">
      <svg class="ml-[22px] mt-[8px] shrink-0" width="40" height="42"><path d="M4 38L18 4Q20 1 22 4L37 36Q38 39 35 39H5Q2 39 4 36Z" fill="#fffaa8" stroke="#555030" stroke-width="2"/><path d="M4 38.500H36" stroke="#8c8a5c" stroke-width="3"/><path d="M17 12H23L22 25H18Z" fill="#222"/><circle cx="20" cy="31.500" r="3" fill="#222"/></svg>
      <div class="ml-[28px] mt-[13px] w-[1351px] h-[40px] overflow-hidden leading-[27px]"><div><b>Plugin processing:</b> The p</div><div>been solved</div></div>
      <div class="mt-[13px] w-[528px] text-right shrink-0 leading-[27px]">e the plugin when the problem has</div>
      <div class="ml-[71px] mt-[8px] flex flex-col gap-[2px] shrink-0">
        <div class="w-[30px] h-[22px] border-2 border-t-white border-l-white border-r-[#ccc] border-b-[#c8c8c8] flex justify-center items-end"><svg width="16" height="15"><path d="M7 0H9L16 15H0Z" fill="#7f6400"/></svg></div>
        <div class="w-[30px] h-[22px] border-2 border-t-white border-l-white border-r-[#ccc] border-b-[#c8c8c8] flex justify-center items-end"><svg width="16" height="14"><path d="M0 0H16L9 14H7Z" fill="#7f6400"/></svg></div>
      </div>
      <svg class="ml-[75px] mt-[11px] shrink-0" width="34" height="34"><circle cx="17" cy="17" r="17" fill="#7f6400"/><path d="M10.500 10.500L23.500 23.500M23.500 10.500L10.500 23.500" stroke="#fff" stroke-width="4.500"/></svg>
    </div>
    <!-- Barrio_Vereda polygon with roads -->
    <svg class="ml-[1582px] mt-[387px]" width="136" height="219" viewBox="1212 740 260 658" preserveAspectRatio="none">
      <path d="M1200 738L1212 747L1222 762L1240 770L1262 786L1290 787L1304 810L1320 834L1328 818L1340 808L1352 830L1362 852L1378 854L1374 876L1378 888L1366 912L1358 932L1364 950L1380 962L1384 1000L1390 1036L1408 1046L1418 1075L1421 1105L1414 1134L1434 1150L1445 1164L1442 1195L1430 1228L1408 1234L1403 1275L1412 1294L1430 1298L1444 1330L1446 1352L1459 1378L1461 1400H1200Z" fill="#dc79b0" stroke="#5f4460" stroke-width="1.500" vector-effect="non-scaling-stroke"/>
      <path d="M1212 747L1240 770L1262 786M1310 822L1320 834L1328 818L1340 808L1352 830L1362 852L1378 854L1374 876L1378 888M1366 912L1358 932L1364 950M1408 1234L1403 1275L1412 1294" fill="none" stroke="#8fae70" stroke-width="1.500" vector-effect="non-scaling-stroke"/>
      <path vector-effect="non-scaling-stroke" fill="none" stroke="#bec27e" stroke-width="1.600" d="M1212 900L1230 886L1258 884L1268 868L1258 856L1262 836L1300 832L1316 824M1268 868L1280 876L1290 898L1298 898L1306 872L1316 880L1320 902L1306 914L1286 920L1256 938L1242 920L1226 932L1228 960L1240 1000L1246 1100M1212 944L1226 960M1212 1116L1226 1102L1246 1100L1264 1108L1290 1088L1312 1082L1330 1056L1352 1034L1370 1016L1382 970M1370 1016L1386 1044L1404 1064L1406 1090L1398 1108L1366 1108M1398 1060L1400 1120L1388 1138M1312 1082L1330 1106L1350 1112L1384 1140L1408 1150M1312 1092L1346 1104L1334 1084L1344 1072L1360 1082L1354 1100M1390 1146L1370 1176L1372 1220M1338 1178L1370 1186L1384 1182M1264 1108L1274 1150L1296 1196L1306 1222L1340 1226L1392 1222L1412 1222M1212 1140L1234 1170L1242 1222L1212 1222M1242 1222L1268 1218L1290 1232L1310 1256L1336 1272L1392 1272L1400 1220M1212 1280L1228 1240L1250 1232L1258 1246L1252 1268L1224 1282M1222 1290L1238 1290L1234 1316L1214 1326V1290M1268 1224L1258 1260L1256 1310L1262 1340L1296 1342L1316 1300L1338 1276M1262 1340L1268 1360L1264 1398M1296 1342L1304 1366M1358 1274L1372 1290L1366 1304L1346 1302L1338 1334L1350 1340L1326 1358L1314 1398M1382 1274L1378 1340L1384 1398M1338 1350L1350 1362L1376 1360M1396 1300L1412 1330L1418 1380L1450 1380M1400 1340L1418 1330"/>
    </svg>
  </div>
</div>

<!-- dialog window -->
<div class="absolute left-[1052px] top-[86px] w-[1182px] h-[800px] overflow-hidden bg-[#ebebeb] rounded-t-[10px] shadow-[0_0_2px_rgba(0,0,0,0.45),0_24px_60px_rgba(0,0,0,0.45),0_60px_60px_rgba(0,0,0,0.1)]">
  <div class="h-11 rounded-t-[10px] bg-[#f6f6f6] border-b-2 border-[#d0d0d0] border-t-2 border-t-[#fbfbfb] flex items-start">
    <div class="flex gap-4 ml-4 mt-2"><div class="w-6 h-6 rounded-full bg-[#dcdcdc] border-2 border-[#d3d3d3]"></div><div class="w-6 h-6 rounded-full bg-[#dcdcdc] border-2 border-[#d3d3d3]"></div><div class="w-6 h-6 rounded-full bg-[#dcdcdc] border-2 border-[#d3d3d3]"></div></div>
    <svg class="ml-[319px] mt-[3px]" width="26" height="34"><path d="M18 5C10 3 4 9 3 17C2 26 8 30 14 27L17 32H22L19 26C23 20 22 10 19 7Z" fill="#e3ee8a"/><path d="M10 23C8 15 12 10 17 8" fill="none" stroke="#f6f6f6" stroke-width="2"/><path d="M24 1L10 22L17 15Z" fill="#4f9d52" stroke="#6aa86a"/><path d="M1 28H6M4 25V31" stroke="#667a5a" stroke-width="2"/></svg>
    <div class="ml-[11px] mt-[7px] text-[#ababab] tracking-[0.2px]">Save vector layer as...</div>
  </div>

  <div class="mt-16 pl-16 flex items-start h-[42px]">
    <div class="w-[108px] pt-[3px]">Format</div>
    <div class="w-[946px] h-[42px] flex bg-white border-2 border-[#c8c8c8] border-b-[#a8a8a8] rounded-lg overflow-hidden"><div class="flex-1 pl-[15px]">ESRI Shapefile</div><div class="w-8 bg-linear-to-b from-[#e0e0e0] to-[#cdcdcd] grid place-items-center text-white"><svg width="14" height="24"><use href="#updown"/></svg></div></div>
  </div>
  <div class="mt-[26px] pl-16 flex items-start h-[42px]">
    <div class="w-[110px] pt-[5px]">Save as</div>
    <div class="w-[780px] h-[42px] bg-white border-2 border-[#bdbdbd] flex justify-end overflow-hidden pt-[3px] pr-2">n/Dropbox/C4SR/CUIP/mdl_tutorial/shapefiles/barrio_centrality.shp</div>
    <div class="ml-4 w-[148px] h-[42px] bg-white border-2 border-[#c8c8c8] border-b-[#a8a8a8] rounded-lg text-center pt-px">Browse</div>
  </div>
  <div class="mt-8 pl-16 flex items-start h-[52px]">
    <div class="w-[114px] pt-[10px]">CRS</div>
    <div class="mt-[6px] w-[887px] h-[42px] flex bg-white border-2 border-[#c8c8c8] border-b-[#a8a8a8] rounded-lg overflow-hidden"><div class="flex-1 pl-[15px] tracking-[-0.02px]">Selected CRS (EPSG:21896, Bogota 1975 / Colombia West zone)</div><div class="w-[31px] bg-linear-to-b from-[#e0e0e0] to-[#cdcdcd] grid place-items-center text-white"><svg width="14" height="24"><use href="#updown"/></svg></div></div>
    <div class="ml-px w-[52px] h-[52px] bg-[#ececec] border-2 border-[#c6c6c6] grid place-items-center"><svg width="32" height="32"><circle cx="16" cy="16" r="14" fill="#8fc3ea"/><path d="M1 16C2 10 6 8 8 6L13 1H20L26 7C29 10 30 13 31 16L16 18Z" fill="#8f979e"/><path d="M4 13H28M8 7H25M11 2L6 16M21 2L26 16M16 1V16" stroke="#c5cbd0" stroke-width="1.200"/><rect x="18" y="18" width="14" height="14" fill="#c9a200"/><path d="M21 29L29 21" stroke="#fff" stroke-width="3"/></svg></div>
  </div>

  <!-- scrolled options -->
  <div class="mt-[52px] ml-10 w-[1102px] h-[446px] overflow-hidden border-2 border-b-0 border-[#b0b0b0] border-t-[#8e8e8e] flex">
    <div class="flex-1 pl-6 pt-7">
      <div class="flex items-start h-[42px]">
        <div class="w-[514px] pt-[3px]">Encoding</div>
        <div class="w-[500px] h-[42px] flex bg-white border-2 border-[#c8c8c8] border-b-[#a8a8a8] rounded-lg overflow-hidden"><div class="flex-1 pl-4">System</div><div class="w-8 bg-linear-to-b from-[#e0e0e0] to-[#cdcdcd] grid place-items-center text-white"><svg width="14" height="24"><use href="#updown"/></svg></div></div>
      </div>
      <div class="mt-6 flex flex-col gap-[10px]">
        <div class="flex h-7"><div class="w-7 h-7 rounded-[6px] border-2 border-[#cfcfcf] bg-[#f3f3f3]"></div><span class="ml-2 -mt-[3px] text-[#858585]">Save only selected features</span></div>
        <div class="flex h-7"><div class="w-7 h-7 rounded-[6px] border-2 border-[#b4b4b4] bg-white"></div><span class="ml-2 -mt-[3px]">Skip attribute creation</span></div>
        <div class="flex h-7"><div class="w-7 h-7 rounded-[6px] border-2 border-[#b4b4b4] bg-[#efefef]"><svg class="-m-[2px] max-w-none" width="28" height="28"><path d="M6 16L11.500 23L21 7" fill="none" stroke="#bdbdbd" stroke-width="4.600"/><path d="M6 16L11.500 23L21 7" fill="none" stroke="#fff" stroke-width="2.400"/></svg></div><span class="ml-2 -mt-[3px]">Add saved file to map</span></div>
      </div>
      <div class="flex items-start h-[42px] mt-5">
        <div class="w-[514px] pt-[3px]">Symbology export</div>
        <div class="w-[500px] h-[42px] flex bg-white border-2 border-[#c8c8c8] border-b-[#a8a8a8] rounded-lg overflow-hidden"><div class="flex-1 pl-4">No symbology</div><div class="w-8 bg-linear-to-b from-[#e0e0e0] to-[#cdcdcd] grid place-items-center text-white"><svg width="14" height="24"><use href="#updown"/></svg></div></div>
      </div>
      <div class="flex items-start h-11 mt-7 text-[#444]">
        <div class="w-[520px] pt-[5px]">Scale</div>
        <div class="w-[466px] h-11 bg-white border-2 border-[#cfcfcf] pl-[6px] pt-[5px]">1:50000</div>
        <div class="ml-[6px] mt-[2px] w-[26px] h-11 rounded-full bg-[#f6f6f6] border-2 border-[#cdcdcd] grid place-items-center text-[#777]"><svg width="12" height="26" viewBox="0 0 12 26"><path d="M2 8L6 3L10 8M2 18L6 23L10 18" fill="none" stroke="currentColor" stroke-width="2.600"/></svg></div>
      </div>
      <div class="flex h-7 mt-[5px] font-bold text-[#1c1c1c]"><svg class="ml-[5px] mt-[10px]" width="22" height="15"><path d="M0 0H22L12 15H10Z" fill="#3c3c3c"/></svg><span class="ml-[17px]">Geometry</span></div>
      <div class="mt-[7px] w-[1020px] h-[120px] rounded-lg border-2 border-[#b2b2b2] bg-[#e4e4e4] pl-6 pt-7 flex items-start">
        <div class="w-[488px] pt-[3px]">Geometry type</div>
        <div class="w-[474px] h-[42px] flex bg-white border-2 border-[#c8c8c8] border-b-[#a8a8a8] rounded-lg overflow-hidden"><div class="flex-1 pl-4">Automatic</div><div class="w-8 bg-linear-to-b from-[#e0e0e0] to-[#cdcdcd] grid place-items-center text-white"><svg width="14" height="24"><use href="#updown"/></svg></div></div>
      </div>
    </div>
    <div class="w-[29px] shrink-0 bg-[#fafafa] pl-[7px] pt-[2px]"><div class="w-4 h-[470px] rounded-full bg-[#c1c1c1]"></div></div>
  </div>
</div>
</body>
</html>
